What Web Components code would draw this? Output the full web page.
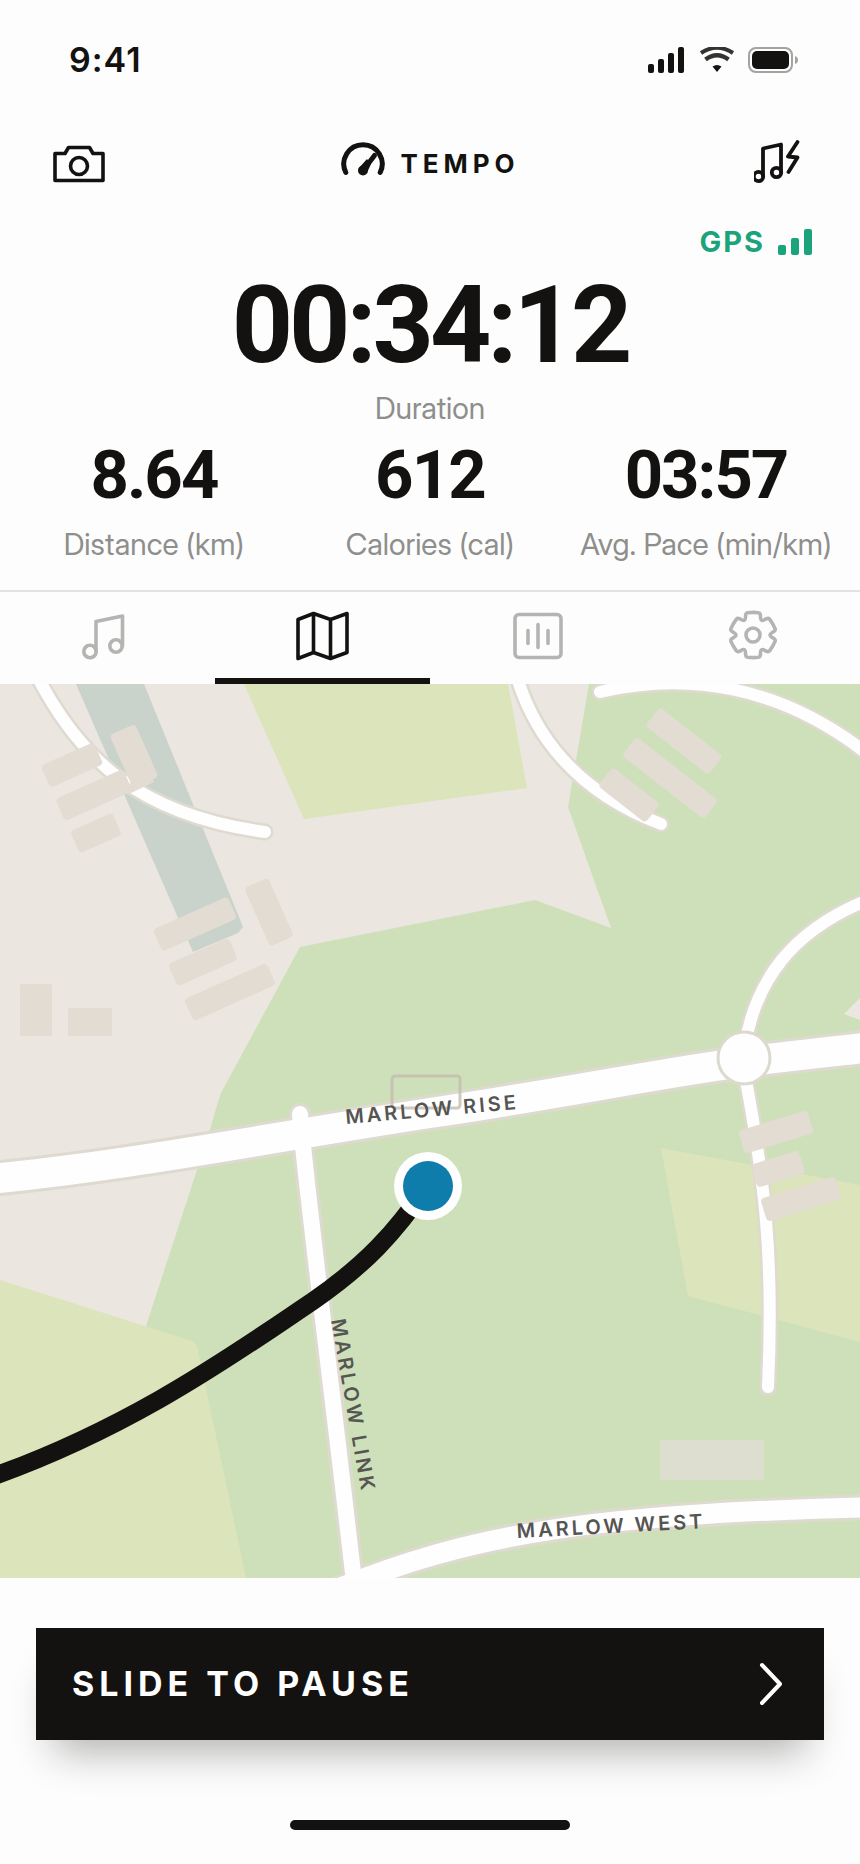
<!DOCTYPE html>
<html lang="en">
<head>
<meta charset="utf-8">
<meta name="viewport" content="width=device-width, initial-scale=1">
<title>Tempo</title>
<style>
  body {
    margin: 0;
    background: #fdfdfd;
    color: #131210;
    font-family: Inter, "Liberation Sans", sans-serif;
  }
</style>
</head>
<body>
<tempo-app></tempo-app>
<script>
const define = (name, html, setup) => {
  const template = document.createElement('template');
  template.innerHTML = html;
  customElements.define(name, class extends HTMLElement {
    constructor() {
      super();
      this.attachShadow({ mode: 'open' }).append(template.content.cloneNode(true));
      if (setup) setup(this.shadowRoot);
    }
  });
};

define('status-bar', `
<style>
  :host { display: flex; justify-content: space-between; align-items: center; padding: 40px 62px 0 69px; }
  time { font-size: 34px; line-height: 40px; font-weight: 600; letter-spacing: 1px; }
  svg { display: block; }
</style>
<time>9:41</time>
<svg width="150" height="26" viewBox="648 48 150 26" role="img" aria-label="Signal, Wi-Fi and battery full">
  <g fill="#131210">
    <rect x="648" y="65" width="6" height="9" rx="2"/>
    <rect x="658" y="60" width="6" height="14" rx="2"/>
    <rect x="668" y="54" width="6" height="20" rx="2"/>
    <rect x="678" y="48" width="6" height="26" rx="2"/>
    <path d="M712.5 67.5Q717 64.5 721.5 67.5L717 73Z"/>
  </g>
  <g fill="none" stroke="#333331" stroke-width="4">
    <path d="M701 54Q717 43.500 733 54" />
    <path d="M705.500 60.500Q717 52 728.500 60.500" stroke-width="4.500"/>
  </g>
  <rect x="749" y="49" width="43" height="24" rx="7" fill="none" stroke="#a3a3a2" stroke-width="2"/>
  <rect x="752" y="52" width="37" height="18" rx="5" fill="#131210"/>
  <path d="M795 57Q798 58 798 61T795 65Z" fill="#a3a3a2"/>
</svg>`);

define('app-header', `
<style>
  :host { display: grid; grid-template-columns: 1fr auto 1fr; align-items: center; padding: 60px 52px 0 53px; }
  button { all: unset; display: flex; cursor: pointer; justify-self: start; }
  button:last-child { justify-self: end; }
  svg { display: block; }
  h1 { display: flex; align-items: center; gap: 15px; margin: 0; font-size: 26px; line-height: 48px; font-weight: 700; letter-spacing: 5px; }
</style>
<button type="button" aria-label="Camera">
  <svg width="52" height="44" viewBox="53 142 52 44" fill="none" stroke="#131210" stroke-width="3.600" stroke-linejoin="round">
    <path d="M55 153.500H65L68.500 147.500H89.500L93 153.500H103V180.500H55Z"/><circle cx="79" cy="166" r="8.500"/>
  </svg>
</button>
<h1>
  <svg width="44" height="44" viewBox="342 142 44 44" aria-hidden="true">
    <path d="M346.800 172.500A19.200 19.200 0 1 1 381.200 172.500" fill="none" stroke="#131210" stroke-width="5" stroke-linecap="round"/>
    <path d="M364 170.500L375.500 155.500" fill="none" stroke="#131210" stroke-width="5" stroke-linecap="round"/>
    <circle cx="364" cy="170.500" r="5" fill="#131210"/>
    <path d="M359.500 168.500L368 159L372 164L368.800 171Z" fill="#131210"/>
  </svg>
  <span>TEMPO</span>
</h1>
<button type="button" aria-label="Music boost">
  <svg width="54" height="48" viewBox="754 140 54 48" fill="none" stroke="#131210" stroke-width="3.800" stroke-linejoin="round" stroke-linecap="round">
    <path d="M763 176V148.500L781 144.500V172"/><circle cx="758.500" cy="176.500" r="4.700"/><circle cx="776.500" cy="172.500" r="4.700"/>
    <path d="M797.500 142L788 156.500L797.500 157.500L788.500 172"/>
  </svg>
</button>`);

define('gps-status', `
<style>
  :host { display: flex; justify-content: flex-end; align-items: center; gap: 13px; margin-top: 34px; padding: 0 48px; color: #1ba47b; font-size: 29px; line-height: 40px; font-weight: 700; letter-spacing: 2px; }
</style>
<span>GPS</span>
<svg width="34" height="26" viewBox="0 0 34 26" fill="currentColor" role="img" aria-label="Strong">
  <rect y="16" width="8" height="10" rx="2"/><rect x="13" y="9" width="8" height="17" rx="2"/><rect x="26" width="8" height="26" rx="2"/>
</svg>`);

define('run-metric', `
<style>
  :host { display: flex; flex-direction: column; align-items: center; gap: var(--gap, 17px); min-width: 0; }
  .value { font-family: Roboto, Inter, sans-serif; font-size: var(--size, 67px); line-height: var(--line, 68px); font-weight: 700; letter-spacing: var(--track, -2px); font-variant-numeric: tabular-nums; white-space: nowrap; }
  .label { font-family: "Inter Display", Inter, sans-serif; font-size: 30px; line-height: 36px; color: #8e8e8c; white-space: nowrap; }
</style>
<div class="value"><slot name="value"></slot></div>
<div class="label"><slot></slot></div>`);

define('run-stats', `
<style>
  :host { display: block; padding: 12px 16px 28px; }
  .main { --size: 107px; --line: 104px; --track: -4px; --gap: 12px; }
  .row { display: grid; grid-template-columns: repeat(3, 1fr); margin-top: 15px; }
</style>
<run-metric class="main"><span slot="value">00:34:12</span>Duration</run-metric>
<div class="row">
  <run-metric><span slot="value">8.64</span>Distance (km)</run-metric>
  <run-metric><span slot="value">612</span>Calories (cal)</run-metric>
  <run-metric><span slot="value">03:57</span>Avg. Pace (min/km)</run-metric>
</div>`);

define('view-tabs', `
<style>
  :host { display: block; border-top: 2px solid #e2e2e2; }
  div { display: grid; grid-template-columns: repeat(4, 1fr); }
  button { all: unset; box-sizing: border-box; height: 92px; display: flex; align-items: center; justify-content: center; cursor: pointer; color: #b4b4b2; border-bottom: 6px solid transparent; }
  button[aria-selected="true"] { color: #131210; border-color: #131210; }
  svg { display: block; fill: none; stroke: currentColor; stroke-width: 3.600; stroke-linejoin: round; stroke-linecap: round; }
</style>
<div role="tablist" aria-label="Run view">
  <button role="tab" aria-selected="false" aria-label="Music"><svg width="54" height="54" viewBox="81 608 54 54">
    <path d="M96 651V621.500L122.500 616V646"/><circle cx="90" cy="651.500" r="6.200"/><circle cx="116" cy="646" r="6.200"/></svg></button>
  <button role="tab" aria-selected="true" aria-label="Map"><svg width="54" height="54" viewBox="296 608 54 54">
    <path d="M298 619.500L313.500 613.500L330.500 619.500L347 613.500V652.500L330.500 658.500L313.500 652.500L298 658.500ZM313.500 613.500V652.500M330.500 619.500V658.500"/></svg></button>
  <button role="tab" aria-selected="false" aria-label="Stats"><svg width="54" height="54" viewBox="511 608 54 54">
    <rect x="515" y="614.500" width="46" height="43" rx="4"/><path d="M528 630.500V643.500M538 624.500V647.500M548 630.500V643.500"/></svg></button>
  <button role="tab" aria-selected="false" aria-label="Settings"><svg width="54" height="54" viewBox="-27 -27 54 54">
    <path id="gear"/><circle r="7"/></svg></button>
</div>`, root => {
  // Six identical teeth, each a sixth of a turn from the last.
  let d = '';
  for (let i = 0; i < 6; i++) {
    const a = i * Math.PI / 3, c = Math.cos(a), s = Math.sin(a);
    const p = (x, y) => (x * c - y * s).toFixed(2) + ' ' + (x * s + y * c).toFixed(2);
    d += (i ? 'L' : 'M') + p(-7.5, -18.5) + 'L' + p(-7.2, -20.8) + 'Q' + p(-7, -22) + ' ' + p(-5.5, -22.3)
      + 'Q' + p(0, -23) + ' ' + p(5.5, -22.3) + 'Q' + p(7, -22) + ' ' + p(7.2, -20.8)
      + 'L' + p(7.5, -18.5) + 'Q' + p(7.2, -12.5) + ' ' + p(12.27, -15.75);
  }
  root.getElementById('gear').setAttribute('d', d + 'Z');
});

define('route-map', `
<style>
  :host { display: block; }
  svg { display: block; width: 100%; height: auto; }
  .case, .road { fill: none; stroke-linecap: round; }
  .case { stroke: #dedad0; }
  .road { stroke: #fefefe; }
  .field { fill: #dce4bb; }
  .built { fill: #e2dcd2; }
  text { font-size: 20px; font-weight: 600; letter-spacing: 3px; fill: #555552; }
</style>
<svg viewBox="0 684 860 894" role="img" aria-label="Map of the current route">
  <defs>
    <g id="minor">
      <path d="M36 674C80 760 140 815 265 832"/>
      <path d="M516 674C534 736 577 792 661 824"/>
      <path d="M600 692C685 672 780 684 870 756"/>
      <path d="M744 1050C755 980 792 930 870 899"/>
      <path d="M744 1070C765 1180 774 1260 768 1387"/>
    </g>
    <path id="rise" d="M-20 1180C130 1166 260 1139 430 1113C560 1094 660 1073 744 1062C790 1056 830 1052 880 1046"/>
    <path id="link" d="M300 1114C306 1190 330 1370 354 1582"/>
    <path id="west" d="M330 1592C470 1533 600 1513 880 1507"/>
  </defs>
  <rect y="684" width="860" height="894" fill="#ebe6df"/>
  <path d="M589 684L568 807L611 928L535 900L300 947L221 1093Q216 1108 210 1130L146 1326L140 1578H860V684Z" fill="#cee0b9"/>
  <path d="M844 1014L860 998V1020Z" fill="#ebe6df"/>
  <path d="M76 684H144L243 927L238 933L193 952Z" fill="#cad2cc"/>
  <path class="field" d="M244 684L304 819L527 788L508 684ZM0 1280L192 1341Q196 1343 197 1346L246 1578H0ZM661 1148L860 1185V1342L688 1296Z"/>
  <g class="case">
    <use href="#minor" stroke-width="17"/><use href="#rise" stroke-width="36"/>
    <use href="#link" stroke-width="22"/><use href="#west" stroke-width="26"/>
  </g>
  <g class="road">
    <use href="#minor" stroke-width="12"/><use href="#rise" stroke-width="30"/>
    <use href="#link" stroke-width="16"/><use href="#west" stroke-width="20"/>
  </g>
  <circle cx="744" cy="1058" r="26" fill="#fefefe" stroke="#dcd9cd" stroke-width="3"/>
  <g class="built">
    <rect x="-29" y="-12" width="58" height="24" rx="4" transform="translate(72 765) rotate(-24)"/>
    <rect x="-37" y="-12" width="74" height="24" rx="4" transform="translate(94 795) rotate(-24)"/>
    <path d="M124 789L146 768L154 782L129 794Z"/>
    <rect x="-14" y="-29" width="28" height="58" rx="4" transform="translate(134 756) rotate(-24)"/>
    <rect x="-23" y="-12" width="46" height="24" rx="4" transform="translate(96 833) rotate(-24)"/>
    <rect x="-41" y="-12" width="82" height="24" rx="4" transform="translate(195 924) rotate(-24)"/>
    <rect x="-33" y="-12" width="66" height="24" rx="4" transform="translate(203 962) rotate(-24)"/>
    <rect x="-45" y="-12" width="90" height="24" rx="4" transform="translate(230 992) rotate(-24)"/>
    <rect x="-13" y="-32" width="26" height="64" rx="4" transform="translate(269 912) rotate(-24)"/>
    <rect x="20" y="984" width="32" height="52" rx="2"/>
    <rect x="68" y="1008" width="44" height="28" rx="2"/>
    <rect x="-40" y="-12" width="80" height="24" rx="4" transform="translate(684 741) rotate(38)"/>
    <rect x="-52" y="-12" width="104" height="24" rx="4" transform="translate(670 778) rotate(38)"/>
    <rect x="-30" y="-12" width="60" height="24" rx="4" transform="translate(629 795) rotate(38)"/>
    <rect x="-36" y="-12" width="72" height="24" rx="4" transform="translate(776 1132) rotate(-17)"/>
    <rect x="-25" y="-12" width="50" height="24" rx="4" transform="translate(778 1169) rotate(-17)"/>
    <rect x="-39" y="-12" width="78" height="24" rx="4" transform="translate(801 1199) rotate(-17)"/>
    <rect x="660" y="1440" width="104" height="40" rx="3" fill="#dddecf"/>
  </g>
  <rect x="392" y="1076" width="68" height="32" rx="3" fill="none" stroke="#c4bcb0" stroke-opacity=".8" stroke-width="3"/>
  <path d="M-20 1481C130 1430 240 1350 313 1301C365 1265 395 1233 427 1186" fill="none" stroke="#131210" stroke-width="18"/>
  <circle cx="428" cy="1186" r="34" fill="#fefefe"/>
  <circle cx="428" cy="1186" r="25" fill="#0f7dab"/>
  <text transform="translate(346 1124) rotate(-5)">MARLOW RISE</text>
  <text transform="translate(331 1320) rotate(80)">MARLOW LINK</text>
  <text transform="translate(517 1538) rotate(-3)">MARLOW WEST</text>
</svg>`);

define('slide-button', `
<style>
  :host { display: block; padding: 50px 36px 80px; }
  button { all: unset; box-sizing: border-box; width: 100%; height: 112px; padding: 0 38px 0 36px; display: flex; align-items: center; justify-content: space-between; background: #131210; color: #fefefe; font-size: 34px; line-height: 40px; font-weight: 700; letter-spacing: 5px; box-shadow: 0 30px 40px -18px rgba(19, 18, 16, .32); cursor: pointer; }
</style>
<button type="button">
  <span><slot></slot></span>
  <svg width="34" height="44" viewBox="0 0 34 44" fill="none" stroke="currentColor" stroke-width="4" stroke-linecap="round" stroke-linejoin="round" aria-hidden="true"><path d="M10 3L28 22L10 41"/></svg>
</button>`);

define('home-indicator', `
<style>
  :host { display: block; padding-bottom: 34px; }
  div { width: 280px; height: 10px; border-radius: 5px; margin: 0 auto; background: #131210; }
</style>
<div></div>`);

define('tempo-app', `
<style>:host { display: block; }</style>
<status-bar></status-bar>
<app-header></app-header>
<main>
  <gps-status></gps-status>
  <run-stats></run-stats>
  <view-tabs></view-tabs>
  <route-map></route-map>
  <slide-button>SLIDE TO PAUSE</slide-button>
</main>
<home-indicator></home-indicator>`);
</script>
</body>
</html>
